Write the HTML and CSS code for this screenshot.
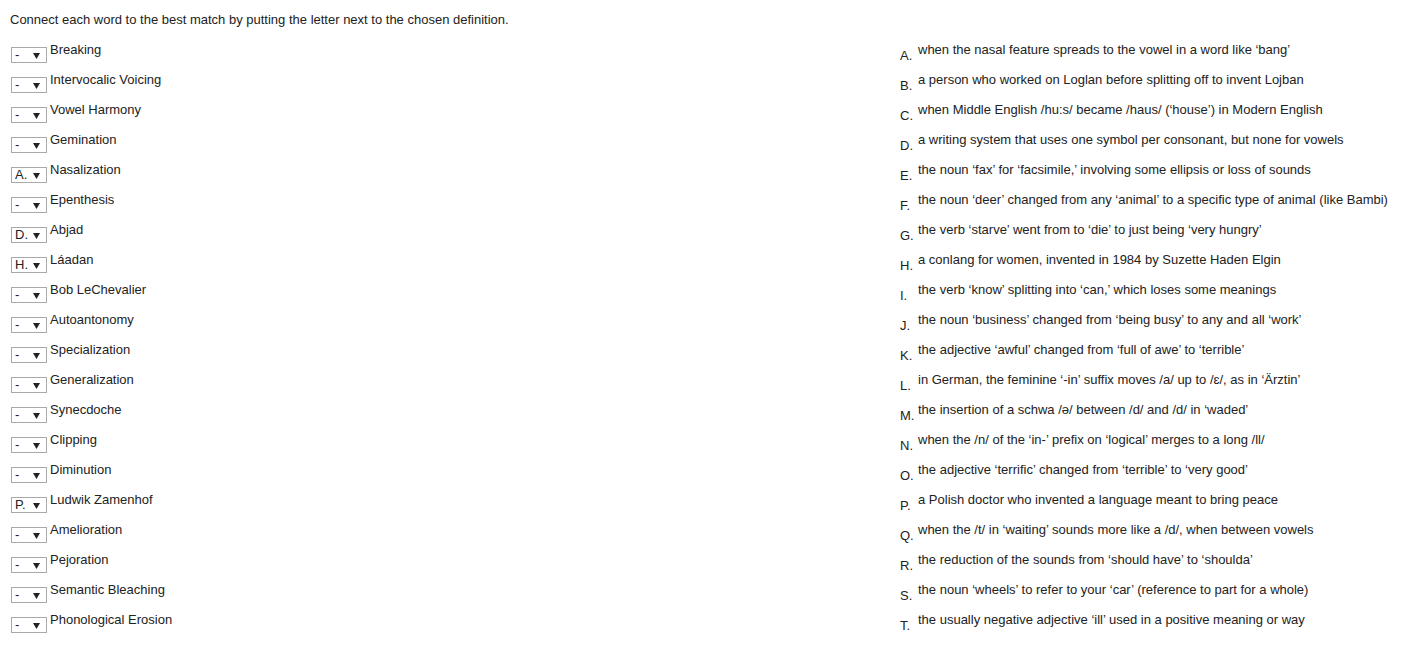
FILE: index.html
```html
<!DOCTYPE html>
<html lang="en">
<head>
    <meta charset="UTF-8">
    <title>Matching</title>
    <link rel="stylesheet" href="styles.css">
</head>
<body>
    <p class="intro">Connect each word to the best match by putting the letter next to the chosen definition.</p>

    <div class="quiz">
        <ul class="words" id="words"></ul>
        <ol class="defs" id="defs"></ol>
    </div>

    <script>
        // words with the letter already picked (or '-' for none)
        const words = [
            ['Breaking', '-'], ['Intervocalic Voicing', '-'], ['Vowel Harmony', '-'],
            ['Gemination', '-'], ['Nasalization', 'A.'], ['Epenthesis', '-'],
            ['Abjad', 'D.'], ['Láadan', 'H.'], ['Bob LeChevalier', '-'],
            ['Autoantonomy', '-'], ['Specialization', '-'], ['Generalization', '-'],
            ['Synecdoche', '-'], ['Clipping', '-'], ['Diminution', '-'],
            ['Ludwik Zamenhof', 'P.'], ['Amelioration', '-'], ['Pejoration', '-'],
            ['Semantic Bleaching', '-'], ['Phonological Erosion', '-']
        ];

        const defs = [
            'when the nasal feature spreads to the vowel in a word like ‘bang’',
            'a person who worked on Loglan before splitting off to invent Lojban',
            'when Middle English /hu:s/ became /haus/ (‘house’) in Modern English',
            'a writing system that uses one symbol per consonant, but none for vowels',
            'the noun ‘fax’ for ‘facsimile,’ involving some ellipsis or loss of sounds',
            'the noun ‘deer’ changed from any ‘animal’ to a specific type of animal (like Bambi)',
            'the verb ‘starve’ went from to ‘die’ to just being ‘very hungry’',
            'a conlang for women, invented in 1984 by Suzette Haden Elgin',
            'the verb ‘know’ splitting into ‘can,’ which loses some meanings',
            'the noun ‘business’ changed from ‘being busy’ to any and all ‘work’',
            'the adjective ‘awful’ changed from ‘full of awe’ to ‘terrible’',
            'in German, the feminine ‘-in’ suffix moves /a/ up to /ɛ/, as in ‘Ärztin’',
            'the insertion of a schwa /ə/ between /d/ and /d/ in ‘waded’',
            'when the /n/ of the ‘in-’ prefix on ‘logical’ merges to a long /ll/',
            'the adjective ‘terrific’ changed from ‘terrible’ to ‘very good’',
            'a Polish doctor who invented a language meant to bring peace',
            'when the /t/ in ‘waiting’ sounds more like a /d/, when between vowels',
            'the reduction of the sounds from ‘should have’ to ‘shoulda’',
            'the noun ‘wheels’ to refer to your ‘car’ (reference to part for a whole)',
            'the usually negative adjective ‘ill’ used in a positive meaning or way'
        ];

        const letters = ['-'].concat(defs.map((d, i) => String.fromCharCode(65 + i) + '.'));
        const arrow = '<svg class="arrow" width="7" height="6" viewBox="0 0 7 6"><path d="M0 0H7L3.5 6Z" fill="#222"/></svg>';

        const wordList = document.getElementById('words');
        words.forEach(w => {
            const li = document.createElement('li');
            const opts = letters.map(l => `<option${l === w[1] ? ' selected' : ''}>${l}</option>`).join('');
            li.innerHTML = `<span class="pick"><select>${opts}</select>${arrow}</span><span class="word">${w[0]}</span>`;
            wordList.appendChild(li);
        });

        const defList = document.getElementById('defs');
        defs.forEach((d, i) => {
            const li = document.createElement('li');
            li.innerHTML = `<span class="letter">${letters[i + 1]}</span><span class="def">${d}</span>`;
            defList.appendChild(li);
        });
    </script>
</body>
</html>
```

FILE: styles.css
```css
body {
    margin: 0;
    padding: 12px 10px 0 10px;
    font-family: "Liberation Sans", Arial, sans-serif;
    font-size: 13px;
    line-height: 15px;
    color: #222;
    background: #fff;
}
.intro {
    margin: 0 0 16px 0;
}
.quiz {
    display: grid;
    grid-template-columns: 890px 1fr;
}
.words, .defs {
    list-style: none;
    margin: 0;
    padding: 0;
}
.words li {
    display: flex;
    align-items: flex-start;
    height: 30px;
}
.word {
    margin-top: -1px;
}
.pick {
    position: relative;
    display: inline-block;
    margin: 4px 3px 0 1px;
    width: 36px;
    height: 16px;
}
.pick select {
    appearance: none;
    -webkit-appearance: none;
    box-sizing: border-box;
    width: 36px;
    height: 16px;
    margin: 0;
    padding: 0 0 0 3px;
    border: 1px solid #a9a9a9;
    border-radius: 0;
    background: #fff;
    font-family: "Liberation Sans", Arial, sans-serif;
    font-size: 13px;
    line-height: 14px;
    color: #222;
}
.arrow {
    position: absolute;
    right: 7px;
    top: 6px;
    pointer-events: none;
}
.defs {
    margin-top: -1px;
}
.defs li {
    display: flex;
    align-items: flex-start;
    height: 30px;
}
.letter {
    width: 18px;
    margin-top: 6px;
}
```
